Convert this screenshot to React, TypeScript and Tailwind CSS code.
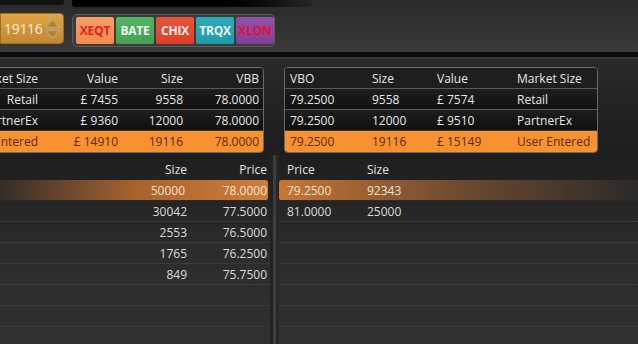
import React from "react";

const leftRows = [
  { ms: "Retail", v: "£ 7455", s: "9558", p: "78.0000" },
  { ms: "PartnerEx", v: "£ 9360", s: "12000", p: "78.0000" },
];
const rightRows = [
  { p: "79.2500", s: "9558", v: "£ 7574", ms: "Retail" },
  { p: "79.2500", s: "12000", v: "£ 9510", ms: "PartnerEx" },
];
const bids = [
  ["50000", "78.0000"],
  ["30042", "77.5000"],
  ["2553", "76.5000"],
  ["1765", "76.2500"],
  ["849", "75.7500"],
  ["", ""],
  ["", ""],
  ["", ""],
];
const asks = [
  ["79.2500", "92343"],
  ["81.0000", "25000"],
  ["", ""],
  ["", ""],
  ["", ""],
  ["", ""],
  ["", ""],
  ["", ""],
];

function Spinner() {
  return (
    <svg width="19" height="24" viewBox="0 0 19 24" className="shrink-0">
      <path d="M9.5 2.5 L16.5 10.5 L2.5 10.5 Z" fill="#b48030" stroke="#b9a27c" strokeWidth="1.5" strokeLinejoin="round" />
      <path d="M9.5 21.5 L16.5 13.5 L2.5 13.5 Z" fill="#b48030" stroke="#b9a27c" strokeWidth="1.5" strokeLinejoin="round" />
    </svg>
  );
}

const btn = "w-[38px] h-[27px] flex items-center justify-center text-[12px] font-bold rounded-[2px] tracking-[-0.2px]";

export default function App() {
  return (
    <div className="w-[638px] h-[344px] overflow-hidden bg-[#262626] font-['Open_Sans',sans-serif] text-[12px] select-none">
      {/* Top bar */}
      <div className="h-[52px] flex bg-gradient-to-b from-[#2a2a2a] to-[#3a3a3a]">
        <div className="w-[64px] flex flex-col">
          <div className="h-[5px] w-[64px] bg-[#121212] rounded-br-[3px]" />
          <div className="mt-[8px] h-[31px] rounded-r-[4px] border border-[#9a6e2c] bg-gradient-to-b from-[#e0a446] to-[#c48630] flex items-center pl-[3px] pr-[1px] justify-between">
            <span className="text-[#fbf1dc] text-[14px] leading-none tracking-[-0.3px]">19116</span>
            <Spinner />
          </div>
        </div>
        <div className="flex-1 ml-[8px] flex flex-col">
          <div className="h-[7px] w-[240px] bg-gradient-to-r from-[#000] via-[#000] to-[#262626] rounded-bl-[3px]" />
          <div className="mt-[7px] w-[203px] h-[33px] rounded-[5px] border border-[#5c5c5c] bg-[#3c3c3c] flex items-center gap-[2px] pl-[3px]">
            <div className={`${btn} bg-gradient-to-b from-[#f7a064] to-[#ee8c4c] text-[#e5201c]`}>XEQT</div>
            <div className={`${btn} bg-gradient-to-b from-[#55b563] to-[#46a152] text-[#f2f2f2]`}>BATE</div>
            <div className={`${btn} bg-gradient-to-b from-[#ea5334] to-[#de4026] text-[#f6f6f6]`}>CHIX</div>
            <div className={`${btn} bg-gradient-to-b from-[#2cadb9] to-[#1f9aa6] text-[#f2f2f2]`}>TRQX</div>
            <div className={`${btn} w-[37px] bg-gradient-to-b from-[#9150a6] to-[#823f98] text-[#e4102e]`}>XLON</div>
          </div>
        </div>
      </div>
      <div className="h-[5px] bg-[#0c0c0c]" />
      <div className="h-[2px] bg-[#383838]" />

      {/* Summary tables */}
      <div className="h-[96px] pt-[8px] bg-gradient-to-b from-[#2a2a2a] via-[#222] to-[#1e1e1e] flex">
        <div className="w-[314px] ml-[-50px] h-[86px] shrink-0 rounded-[4px] border border-[#6a6a6a] overflow-hidden bg-gradient-to-b from-[#1c1c1c] to-[#0e0e0e] text-[#e6e6e6]">
          <div className="grid grid-cols-[90px_80px_65px_1fr] h-[20px] pt-[1px] items-center text-right bg-[#1e1e1e]">
            <div className="pr-[3px]">Market Size</div>
            <div className="pr-[3px]">Value</div>
            <div className="pr-[3px]">Size</div>
            <div className="pr-[4px]">VBB</div>
          </div>
          {leftRows.map((r) => (
            <div key={r.ms} className="grid grid-cols-[90px_80px_65px_1fr] h-[21px] pt-[1px] items-center text-right border-t border-[#5a5a5a] bg-gradient-to-b from-[#1e1e1e] to-[#0f0f0f]">
              <div className="pr-[3px]">{r.ms}</div>
              <div className="pr-[3px]">{r.v}</div>
              <div className="pr-[3px]">{r.s}</div>
              <div className="pr-[4px]">{r.p}</div>
            </div>
          ))}
          <div className="grid grid-cols-[90px_80px_65px_1fr] h-[22px] pt-[1px] items-center text-right bg-[#f8912f] text-[#5e2808] border-t border-[#3a3a3a]">
            <div className="pr-[3px]">User Entered</div>
            <div className="pr-[3px]">£ 14910</div>
            <div className="pr-[3px]">19116</div>
            <div className="pr-[4px]">78.0000</div>
          </div>
        </div>
        <div className="w-[314px] ml-[20px] h-[86px] shrink-0 rounded-[4px] border border-[#6a6a6a] overflow-hidden bg-gradient-to-b from-[#1c1c1c] to-[#0e0e0e] text-[#e6e6e6]">
          <div className="grid grid-cols-[82px_65px_80px_1fr] h-[20px] pt-[1px] items-center bg-[#1e1e1e]">
            <div className="pl-[5px]">VBO</div>
            <div className="pl-[5px]">Size</div>
            <div className="pl-[5px]">Value</div>
            <div className="pl-[5px]">Market Size</div>
          </div>
          {rightRows.map((r) => (
            <div key={r.ms} className="grid grid-cols-[82px_65px_80px_1fr] h-[21px] pt-[1px] items-center border-t border-[#5a5a5a] bg-gradient-to-b from-[#1e1e1e] to-[#0f0f0f]">
              <div className="pl-[5px]">{r.p}</div>
              <div className="pl-[5px]">{r.s}</div>
              <div className="pl-[5px]">{r.v}</div>
              <div className="pl-[5px]">{r.ms}</div>
            </div>
          ))}
          <div className="grid grid-cols-[82px_65px_80px_1fr] h-[22px] pt-[1px] items-center bg-[#f8912f] text-[#5e2808] border-t border-[#3a3a3a]">
            <div className="pl-[5px]">79.2500</div>
            <div className="pl-[5px]">19116</div>
            <div className="pl-[5px]">£ 15149</div>
            <div className="pl-[5px]">User Entered</div>
          </div>
        </div>
      </div>

      {/* Depth */}
      <div className="flex h-[189px]">
        <div className="w-[270px] pt-[4px] bg-gradient-to-b from-[#1e1e1e] via-[#2c2c2c] to-[#303030] text-[#dcdcdc]">
          <div className="grid grid-cols-[1fr_83px_80px] h-[21px] items-center text-right text-[#e4e4e4]">
            <div />
            <div className="pr-[3px]">Size</div>
            <div className="pr-[3px]">Price</div>
          </div>
          {bids.map((b, i) => (
            <div
              key={i}
              className={
                i === 0
                  ? "grid grid-cols-[1fr_83px_80px] h-[21px] pt-[1px] items-center text-right rounded-r-[3px] mr-[2px] bg-gradient-to-r from-[#352d27] via-[#a8622c] to-[#cf7e3a] text-[#f3e2d0] border-b border-[#2a2a2a]"
                  : "grid grid-cols-[1fr_83px_80px] h-[21px] pt-[1px] items-center text-right border-b border-[#3a3a3a]"
              }
            >
              <div />
              <div className="pr-[3px]">{b[0]}</div>
              <div className={i === 0 ? "pr-[1px]" : "pr-[3px]"}>{b[1]}</div>
            </div>
          ))}
        </div>
        <div className="w-[9px] flex bg-[#262626]">
          <div className="w-[3px] bg-[#222]" />
          <div className="w-[3px] bg-[#3e3e3e]" />
          <div className="w-[3px] bg-[#272727]" />
        </div>
        <div className="flex-1 pt-[4px] bg-gradient-to-b from-[#1e1e1e] via-[#2c2c2c] to-[#303030] text-[#dcdcdc]">
          <div className="grid grid-cols-[80px_1fr] h-[21px] items-center text-[#e4e4e4]">
            <div className="pl-[8px]">Price</div>
            <div className="pl-[8px]">Size</div>
          </div>
          {asks.map((a, i) => (
            <div
              key={i}
              className={
                i === 0
                  ? "grid grid-cols-[80px_1fr] h-[21px] pt-[1px] items-center rounded-l-[3px] bg-gradient-to-r from-[#c97632] via-[#6e4a30] to-[#2c2a28] text-[#f3e2d0] border-b border-[#2a2a2a]"
                  : "grid grid-cols-[80px_1fr] h-[21px] pt-[1px] items-center border-b border-[#3a3a3a]"
              }
            >
              <div className="pl-[8px]">{a[0]}</div>
              <div className="pl-[8px]">{a[1]}</div>
            </div>
          ))}
        </div>
      </div>
    </div>
  );
}
